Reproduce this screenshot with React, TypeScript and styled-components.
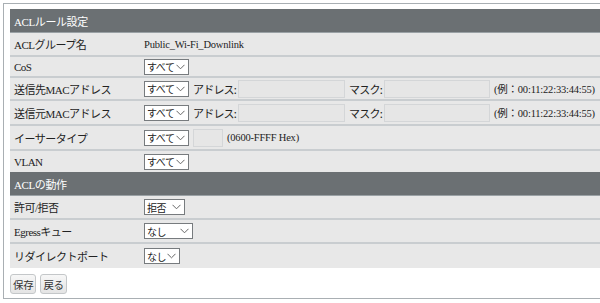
import React from 'react';
import styled, { createGlobalStyle } from 'styled-components';

const GlobalStyle = createGlobalStyle`
    html, body {
        margin: 0;
        padding: 0;
        background: #ffffff;
        overflow: hidden;
    }
    body {
        font-family: "Liberation Serif", "Noto Sans CJK JP", serif;
        font-size: 11px;
        color: #222;
    }
`;

const Frame = styled.div`
    margin: 3px;
    width: 660px;
    border: 1px solid #a9afb3;
    background: #ffffff;
    padding: 5px 6px 4px 6px;
`;

const Table = styled.div`
    display: flex;
    flex-direction: column;
    background: #e8e8e8;
`;

const SectionHeader = styled.div`
    height: 23px;
    display: flex;
    align-items: center;
    padding-left: 4px;
    background: #6b7073;
    color: #ffffff;
    font-size: 11px;
    letter-spacing: -0.4px;
    border-bottom: 1px solid #9aa1a5;
`;

interface RowProps {
    $h: number;
    $last?: boolean;
}

const Row = styled.div<RowProps>`
    display: grid;
    grid-template-columns: 134px 1fr;
    align-items: center;
    height: ${(p) => p.$h}px;
    border-bottom: ${(p) => (p.$last ? 'none' : '2px solid #c9cdd0')};
    box-sizing: border-box;
`;

const Label = styled.div`
    padding-left: 4px;
    white-space: nowrap;
    font-size: 11px;
    letter-spacing: -0.5px;
`;

const Value = styled.div`
    display: flex;
    align-items: center;
    white-space: nowrap;
    font-size: 10.5px;
    letter-spacing: -0.2px;
`;

interface SelectBoxProps {
    $w: number;
}

const SelectBox = styled.div<SelectBoxProps>`
    width: ${(p) => p.$w}px;
    height: 16px;
    box-sizing: border-box;
    border: 1px solid #777b7e;
    background: #ffffff;
    display: flex;
    align-items: center;
    justify-content: space-between;
    padding: 0 3px 0 2px;
    font-family: "Noto Sans CJK JP", sans-serif;
    font-size: 10px;
    letter-spacing: -0.5px;
    color: #222;
`;

const Chevron = styled.svg`
    width: 9px;
    height: 6px;
    flex: none;
`;

const FieldText = styled.span`
    margin-left: 4px;
    margin-right: 2px;
    font-family: "Noto Sans CJK JP", sans-serif;
    font-size: 11px;
    letter-spacing: -0.8px;
    color: #222;
`;

interface InputProps {
    $w: number;
    $ml?: number;
}

const DisabledInput = styled.div<InputProps>`
    width: ${(p) => p.$w}px;
    height: 18px;
    margin-left: ${(p) => p.$ml ?? 0}px;
    box-sizing: border-box;
    border: 1px solid #d4d6d8;
    background: #e6e6e6;
`;

const Note = styled.span`
    margin-left: 4px;
`;

const Footer = styled.div`
    display: flex;
    gap: 4px;
    padding-top: 6px;
`;

const Btn = styled.button`
    height: 20px;
    padding: 0 2px;
    border: 1px solid #c4c7c9;
    border-radius: 3px;
    background: linear-gradient(#f7f7f7, #e4e4e4);
    font-family: "Noto Sans CJK JP", sans-serif;
    font-size: 10.5px;
    letter-spacing: -0.3px;
    color: #333;
    cursor: pointer;
`;

const Select: React.FC<{ text: string; w: number }> = ({ text, w }) => (
    <SelectBox $w={w}>
        <span>{text}</span>
        <Chevron viewBox="0 0 9 6">
            <path d="M0.5 0.8 L4.5 4.8 L8.5 0.8" fill="none" stroke="#666" strokeWidth="1" />
        </Chevron>
    </SelectBox>
);

const MacRow: React.FC<{ label: string; h: number }> = ({ label, h }) => (
    <Row $h={h}>
        <Label>{label}</Label>
        <Value>
            <Select text="すべて" w={45} />
            <FieldText>アドレス:</FieldText>
            <DisabledInput $w={107} />
            <FieldText>マスク:</FieldText>
            <DisabledInput $w={106} />
            <Note>(例：00:11:22:33:44:55)</Note>
        </Value>
    </Row>
);

export default function App() {
    return (
        <>
            <GlobalStyle />
            <Frame>
                <Table>
                    <SectionHeader>ACLルール設定</SectionHeader>
                    <Row $h={24}>
                        <Label>ACLグループ名</Label>
                        <Value>Public_Wi-Fi_Downlink</Value>
                    </Row>
                    <Row $h={21}>
                        <Label>CoS</Label>
                        <Value>
                            <Select text="すべて" w={45} />
                        </Value>
                    </Row>
                    <MacRow label="送信先MACアドレス" h={23} />
                    <MacRow label="送信元MACアドレス" h={25} />
                    <Row $h={25}>
                        <Label>イーサータイプ</Label>
                        <Value>
                            <Select text="すべて" w={45} />
                            <DisabledInput $w={30} $ml={4} />
                            <Note>(0600-FFFF Hex)</Note>
                        </Value>
                    </Row>
                    <Row $h={21} $last>
                        <Label>VLAN</Label>
                        <Value>
                            <Select text="すべて" w={45} />
                        </Value>
                    </Row>
                    <SectionHeader>ACLの動作</SectionHeader>
                    <Row $h={24}>
                        <Label>許可/拒否</Label>
                        <Value>
                            <Select text="拒否" w={41} />
                        </Value>
                    </Row>
                    <Row $h={24}>
                        <Label>Egressキュー</Label>
                        <Value>
                            <Select text="なし" w={49} />
                        </Value>
                    </Row>
                    <Row $h={24} $last>
                        <Label>リダイレクトポート</Label>
                        <Value>
                            <Select text="なし" w={36} />
                        </Value>
                    </Row>
                </Table>
                <Footer>
                    <Btn>保存</Btn>
                    <Btn>戻る</Btn>
                </Footer>
            </Frame>
        </>
    );
}
